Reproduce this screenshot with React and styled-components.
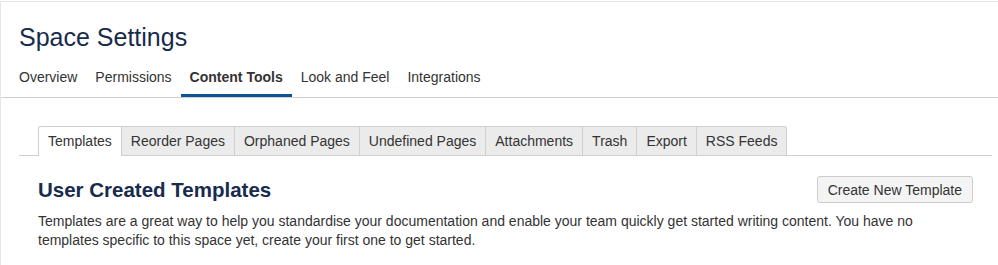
import React from 'react';
import styled, { createGlobalStyle } from 'styled-components';

const GlobalStyle = createGlobalStyle`
  body {
    margin: 0;
    background: #fff;
    font-family: "Liberation Sans", Arial, sans-serif;
    color: #333;
  }
`;

const Page = styled.div`
  height: 264px;
  margin-top: 1px;
  border-top: 1px solid #e4e6ea;
  border-left: 1px solid #e4e6ea;
  overflow: hidden;
`;

const Header = styled.header`
  padding: 0 0 0 18px;
  border-bottom: 1px solid #cfcfcf;
`;

const Title = styled.h1`
  margin: 0;
  padding-top: 19px;
  font-size: 25px;
  line-height: 32px;
  font-weight: 400;
  color: #172b4d;
`;

const Nav = styled.nav`
  display: flex;
  margin: 11px 0 0 -9px;
`;

const NavItem = styled.a`
  padding: 0 9px;
  height: 33px;
  line-height: 26px;
  font-size: 14px;
  color: #333;
  font-weight: ${p => (p.$active ? 700 : 400)};
  box-sizing: border-box;
  border-bottom: 3px solid ${p => (p.$active ? '#0b5394' : 'transparent')};
  cursor: pointer;
`;

const Body = styled.div`
  padding: 28px 6px 0 18px;
`;

const TabStrip = styled.div`
  display: flex;
  padding-left: 19px;
  border-bottom: 1px solid #cfcfcf;
`;

const Tab = styled.div`
  line-height: 28px;
  padding: 0 9px;
  font-size: 14px;
  color: #333;
  background: ${p => (p.$active ? '#fff' : '#ebebeb')};
  border: 1px solid #cfcfcf;
  border-bottom: none;
  border-left-width: ${p => (p.$first ? '1px' : '0')};
  margin-bottom: ${p => (p.$active ? '-1px' : '0')};
  height: ${p => (p.$active ? '29px' : '28px')};
  border-radius: ${p => (p.$first ? '3px 0 0 0' : p.$last ? '0 3px 0 0' : '0')};
`;

const Panel = styled.section`
  padding: 20px 19px 0 19px;
`;

const PanelHead = styled.div`
  display: flex;
  align-items: center;
  justify-content: space-between;
`;

const Heading = styled.h2`
  margin: 0;
  font-size: 20.5px;
  line-height: 27px;
  font-weight: 600;
  color: #172b4d;
`;

const Button = styled.button`
  height: 27px;
  padding: 0 10px;
  font-family: inherit;
  font-size: 14px;
  color: #333;
  background: #f4f4f4;
  border: 1px solid #cccccc;
  border-radius: 3px;
`;

const Text = styled.p`
  margin: 9px 0 0;
  font-size: 14px;
  line-height: 19px;
  color: #333;
`;

const navItems = ['Overview', 'Permissions', 'Content Tools', 'Look and Feel', 'Integrations'];
const tabs = [
  'Templates',
  'Reorder Pages',
  'Orphaned Pages',
  'Undefined Pages',
  'Attachments',
  'Trash',
  'Export',
  'RSS Feeds',
];

const App = () => (
  <>
    <GlobalStyle />
    <Page>
      <Header>
        <Title>Space Settings</Title>
        <Nav>
          {navItems.map(item => (
            <NavItem key={item} $active={item === 'Content Tools'}>
              {item}
            </NavItem>
          ))}
        </Nav>
      </Header>
      <Body>
        <TabStrip>
          {tabs.map((tab, i) => (
            <Tab key={tab} $active={i === 0} $first={i === 0} $last={i === tabs.length - 1}>
              {tab}
            </Tab>
          ))}
        </TabStrip>
        <Panel>
          <PanelHead>
            <Heading>User Created Templates</Heading>
            <Button>Create New Template</Button>
          </PanelHead>
          <Text>
            Templates are a great way to help you standardise your documentation and enable your
            team quickly get started writing content. You have no templates specific to this space
            yet, create your first one to get started.
          </Text>
        </Panel>
      </Body>
    </Page>
  </>
);

export default App;
